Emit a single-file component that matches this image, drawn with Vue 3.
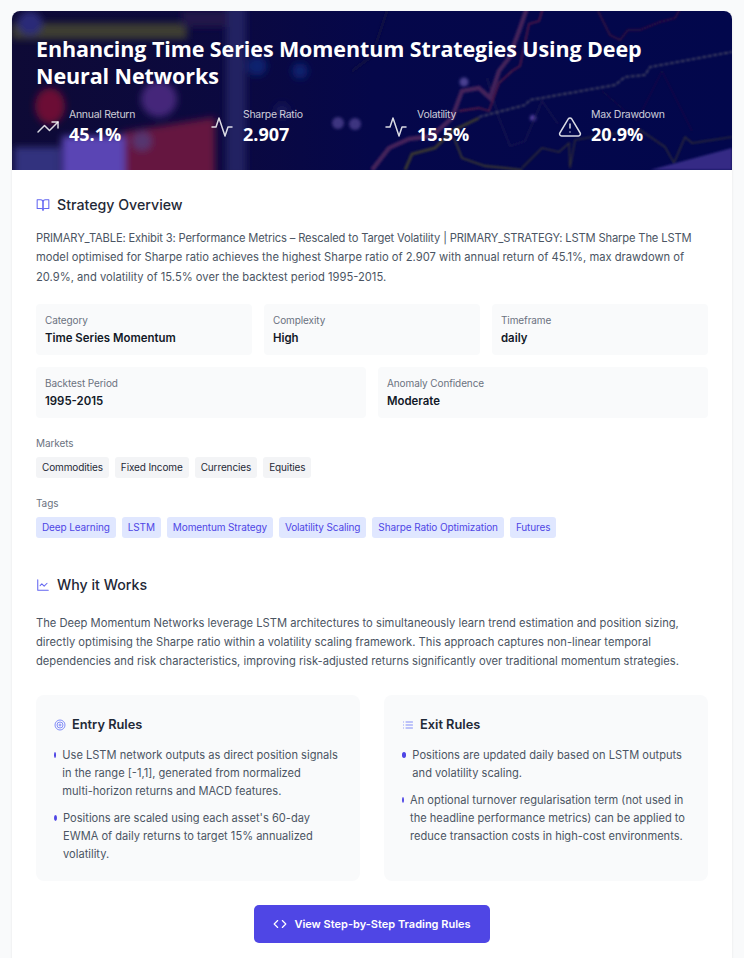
<script setup>
const stats = [
  { label: 'Annual Return', value: '45.1%', icon: 'trend' },
  { label: 'Sharpe Ratio', value: '2.907', icon: 'pulse' },
  { label: 'Volatility', value: '15.5%', icon: 'pulse' },
  { label: 'Max Drawdown', value: '20.9%', icon: 'alert' }
]
const row1 = [
  { label: 'Category', value: 'Time Series Momentum' },
  { label: 'Complexity', value: 'High' },
  { label: 'Timeframe', value: 'daily' }
]
const row2 = [
  { label: 'Backtest Period', value: '1995-2015' },
  { label: 'Anomaly Confidence', value: 'Moderate' }
]
const markets = ['Commodities', 'Fixed Income', 'Currencies', 'Equities']
const tags = ['Deep Learning', 'LSTM', 'Momentum Strategy', 'Volatility Scaling', 'Sharpe Ratio Optimization', 'Futures']
const entry = [
  'Use LSTM network outputs as direct position signals in the range [-1,1], generated from normalized multi-\u2060horizon returns and MACD features.',
  "Positions are scaled using each asset's 60-day EWMA of daily returns to target 15% annualized volatility."
]
const exit = [
  'Positions are updated daily based on LSTM outputs and volatility scaling.',
  'An optional turnover regularisation term (not used in the headline performance metrics) can be applied to reduce transaction costs in high-cost environments.'
]
</script>

<template>
  <div class="page">
    <main class="card">
      <header class="hero">
        <svg class="hero-bg" viewBox="0 0 720 159" preserveAspectRatio="none" aria-hidden="true">
          <defs>
            <filter id="b6" x="-30%" y="-30%" width="160%" height="160%"><feGaussianBlur stdDeviation="3.5" /></filter>
            <filter id="b2" x="-30%" y="-30%" width="160%" height="160%"><feGaussianBlur stdDeviation="1.6" /></filter>
            <filter id="b1" x="-5%" y="-5%" width="110%" height="110%"><feGaussianBlur stdDeviation="0.9" /></filter>
            <linearGradient id="base" x1="0" x2="1" y1="0" y2="0">
              <stop offset="0" stop-color="#0e0a36" />
              <stop offset="0.3" stop-color="#0b0940" />
              <stop offset="0.5" stop-color="#05074a" />
              <stop offset="1" stop-color="#02074c" />
            </linearGradient>
          </defs>
          <rect width="720" height="159" fill="url(#base)" />
          <g filter="url(#b6)">
            <rect x="0" y="12" width="175" height="16" fill="#3c3c30" />
            <circle cx="18" cy="12" r="12" fill="#2c2c78" />
            <ellipse cx="38" cy="95" rx="15" ry="18" fill="#6c0a34" />
            <circle cx="147" cy="88" r="18" fill="#44277a" />
            <path d="M110 121 L203 106 V170 H110 Z" fill="#65133f" />
            <path d="M50 125 H113 V170 H50 Z" fill="#5a44b4" />
            <rect x="2" y="136" width="46" height="35" fill="#32327e" />
            <circle cx="130" cy="130" r="10" fill="#573470" />
            <path d="M214 -5 H234 V165 H214 Z" fill="#232362" />
            <circle cx="245" cy="55" r="10" fill="#0a2470" />
            <circle cx="288" cy="60" r="8" fill="#0a2470" />
            <circle cx="270" cy="100" r="8" fill="#181858" />
            <rect x="170" y="0" width="45" height="16" fill="#221248" />
          </g>
          <g filter="url(#b2)">
            <circle cx="326" cy="112" r="6" fill="#3e3480" />
            <circle cx="343" cy="113" r="6" fill="#3e3480" />
            <circle cx="452" cy="71" r="4.5" fill="#4a4090" />
            <circle cx="521" cy="107" r="3" fill="#5643a0" />
          </g>
          <g fill="none" filter="url(#b1)">
            <path d="M475 67 L487 107 L498 135 L513 130 L530 90 L546 113" stroke="#1e1a50" stroke-width="1.2" />
            <path d="M340 60 L360 45 L375 0" stroke="#100d42" stroke-width="3" />
            <path d="M360 159 L377 137 L397 128 L420 125 L440 107 L450 80 L467 77 L478 87 L487 60 L497 47 L507 20 L515 -3" stroke="#44235a" stroke-width="4.5" />
            <path d="M447 100 L467 97 L477 100 L487 72 L500 60 L508 55 L517 13 L527 10 L531 -3" stroke="#551a45" stroke-width="1.8" />
            <path d="M586 0 L598 24 L608 29 L616 19 L628 19 L648 11 L663 7 L668 -2" stroke="#4e1438" stroke-width="1.2" />
            <path d="M467 106 L513 94 L518 89 L603 74 L613 66 L633 64 L638 56 L720 41" stroke="#464662" stroke-width="1.8" stroke-dasharray="4 1.5" />
            <path d="M393 159 L400 143 L423 137 L440 120 L467 107" stroke="#3a3830" stroke-width="3" />
            <path d="M442 127 L450 147 L473 155 L493 157 L510 159" stroke="#3c3a30" stroke-width="1.8" />
            <path d="M510 157 L530 137 L547 141 L557 132 L558 157 L563 129 L580 126 L628 119 L653 136 L662 152 L673 126 L680 132 L720 126" stroke="#3a3632" stroke-width="1.2" />
            <path d="M590 80 L625 110 L650 60 L680 120" stroke="#1e1440" stroke-width="1" />
          </g>
          <path d="M638 159 L720 137 V159 Z" fill="#352b85" filter="url(#b1)" />
        </svg>
        <h1 class="title">Enhancing Time Series Momentum Strategies Using Deep Neural Networks</h1>
        <div class="stats">
          <div v-for="s in stats" :key="s.label" class="stat">
            <svg class="stat-icon" viewBox="0 0 24 24" fill="none" stroke="currentColor" stroke-width="2" stroke-linecap="round" stroke-linejoin="round">
              <template v-if="s.icon === 'trend'">
                <polyline points="22 7 13.5 15.5 8.5 10.5 2 17" />
                <polyline points="16 7 22 7 22 13" />
              </template>
              <path v-else-if="s.icon === 'pulse'" d="M22 12h-4l-3 9L9 3l-3 9H2" />
              <template v-else>
                <path d="M10.29 3.86 1.82 18a2 2 0 0 0 1.71 3h16.94a2 2 0 0 0 1.71-3L13.71 3.86a2 2 0 0 0-3.42 0z" />
                <line x1="12" y1="9" x2="12" y2="13" />
                <line x1="12" y1="17" x2="12.01" y2="17" />
              </template>
            </svg>
            <div>
              <div class="stat-label">{{ s.label }}</div>
              <div class="stat-value">{{ s.value }}</div>
            </div>
          </div>
        </div>
      </header>

      <div class="content">
        <section>
          <h2 class="section-title">
            <svg class="sec-icon" viewBox="0 0 24 24" fill="none" stroke="currentColor" stroke-width="2" stroke-linecap="round" stroke-linejoin="round">
              <path d="M2 3h6a4 4 0 0 1 4 4v14a3 3 0 0 0-3-3H2z" />
              <path d="M22 3h-6a4 4 0 0 0-4 4v14a3 3 0 0 1 3-3h7z" />
            </svg>
            Strategy Overview
          </h2>
          <p class="para"><span class="tight">PRIMARY_TABLE: Exhibit 3: Performance Metrics – Rescaled to Target Volatility | PRIMARY_STRATEGY: LSTM Sharpe The LSTM</span> model optimised for Sharpe ratio achieves the highest Sharpe ratio of 2.907 with annual return of 45.1%, max drawdown of 20.9%, and volatility of 15.5% over the backtest period 1995-2015.</p>
          <div class="info-grid three">
            <div v-for="i in row1" :key="i.label" class="info">
              <div class="info-label">{{ i.label }}</div>
              <div class="info-value">{{ i.value }}</div>
            </div>
          </div>
          <div class="info-grid two">
            <div v-for="i in row2" :key="i.label" class="info">
              <div class="info-label">{{ i.label }}</div>
              <div class="info-value">{{ i.value }}</div>
            </div>
          </div>
          <div class="chip-block">
            <div class="chip-label">Markets</div>
            <div class="chips">
              <span v-for="m in markets" :key="m" class="chip">{{ m }}</span>
            </div>
          </div>
          <div class="chip-block">
            <div class="chip-label">Tags</div>
            <div class="chips">
              <span v-for="t in tags" :key="t" class="chip tag">{{ t }}</span>
            </div>
          </div>
        </section>

        <section class="why">
          <h2 class="section-title">
            <svg class="sec-icon" viewBox="0 0 24 24" fill="none" stroke="currentColor" stroke-width="2" stroke-linecap="round" stroke-linejoin="round">
              <path d="M3 3v18h18" />
              <path d="m19 9-5 5-4-4-3 3" />
            </svg>
            Why it Works
          </h2>
          <p class="para">The Deep Momentum Networks leverage LSTM architectures to simultaneously learn trend estimation and position sizing, directly optimising the Sharpe ratio within a volatility scaling framework. This approach captures non-linear temporal dependencies and risk characteristics, improving risk-adjusted returns significantly over traditional momentum strategies.</p>
        </section>

        <div class="rules">
          <div class="rule-card">
            <h3 class="rule-title">
              <svg class="rule-icon" viewBox="0 0 24 24" fill="none" stroke="currentColor" stroke-width="2">
                <circle cx="12" cy="12" r="10" />
                <circle cx="12" cy="12" r="6" />
                <circle cx="12" cy="12" r="2" />
              </svg>
              Entry Rules
            </h3>
            <ul class="rule-list">
              <li v-for="r in entry" :key="r"><i class="dot"></i><span>{{ r }}</span></li>
            </ul>
          </div>
          <div class="rule-card">
            <h3 class="rule-title">
              <svg class="rule-icon" viewBox="0 0 24 24" fill="none" stroke="currentColor" stroke-width="2" stroke-linecap="round">
                <line x1="8" y1="6" x2="21" y2="6" />
                <line x1="8" y1="12" x2="21" y2="12" />
                <line x1="8" y1="18" x2="21" y2="18" />
                <line x1="3" y1="6" x2="3.01" y2="6" />
                <line x1="3" y1="12" x2="3.01" y2="12" />
                <line x1="3" y1="18" x2="3.01" y2="18" />
              </svg>
              Exit Rules
            </h3>
            <ul class="rule-list">
              <li v-for="r in exit" :key="r"><i class="dot"></i><span>{{ r }}</span></li>
            </ul>
          </div>
        </div>

        <div class="cta">
          <button class="btn" type="button">
            <svg class="btn-icon" viewBox="0 0 24 24" fill="none" stroke="currentColor" stroke-width="2" stroke-linecap="round" stroke-linejoin="round">
              <polyline points="16 18 22 12 16 6" />
              <polyline points="8 6 2 12 8 18" />
            </svg>
            View Step-by-Step Trading Rules
          </button>
        </div>
      </div>
    </main>
  </div>
</template>

<style>
html, body { margin: 0; background: #f9fafb; }
</style>

<style scoped>
.page {
  height: 958px;
  overflow: hidden;
  padding: 11px 12px 0;
  box-sizing: border-box;
  background: #f9fafb;
  font-family: Inter, "Noto Sans", sans-serif;
  color: #1f2937;
}
.card {
  background: #fff;
  border-radius: 8px 8px 0 0;
  overflow: hidden;
  box-shadow: 0 1px 3px rgba(0, 0, 0, 0.08);
  height: 960px;
}
.hero {
  position: relative;
  height: 159px;
  box-sizing: border-box;
  padding: 25px 24px 0;
  color: #fff;
  overflow: hidden;
}
.hero-bg { position: absolute; inset: 0; width: 100%; height: 100%; }
.title {
  position: relative;
  margin: 0 0 19px;
  font-family: "Open Sans", sans-serif;
  font-size: 21.5px;
  line-height: 26.5px;
  font-weight: 700;
  letter-spacing: -0.1px;
}
.stats {
  position: relative;
  display: grid;
  grid-template-columns: repeat(4, 1fr);
  gap: 24px;
}
.stat { display: flex; align-items: center; gap: 9px; }
.stat-icon { width: 24px; height: 24px; flex: none; color: rgba(255, 255, 255, 0.85); stroke-width: 1.5; }
.stat-label { font-size: 10.5px; line-height: 14px; letter-spacing: -0.3px; color: rgba(255, 255, 255, 0.8); }
.stat-value { font-family: "Open Sans", sans-serif; font-size: 18px; line-height: 24px; font-weight: 700; }
.content { padding: 25px 24px; }
.section-title {
  display: flex;
  align-items: center;
  gap: 7px;
  margin: 0 0 14px;
  font-size: 14.2px;
  line-height: 20px;
  font-weight: 500;
  color: #1f2937;
}
.why .section-title { margin-bottom: 19px; }
.sec-icon { width: 14px; height: 14px; color: #6366f1; flex: none; stroke-width: 1.8; }
.para {
  margin: 0;
  font-size: 11.2px;
  line-height: 19.3px;
  color: #4b5563;
}
.tight { letter-spacing: -0.16px; }
.info-grid { display: grid; gap: 12px; margin-top: 12px; }
.info-grid.three { grid-template-columns: repeat(3, 1fr); margin-top: 17px; }
.info-grid.two { grid-template-columns: repeat(2, 1fr); }
.info {
  background: #f9fafb;
  border-radius: 4px;
  padding: 9px 9px 0;
  height: 51px;
  box-sizing: border-box;
}
.info-label { font-size: 10px; line-height: 15px; letter-spacing: -0.1px; color: #6b7280; }
.info-value { font-size: 11.4px; line-height: 21px; font-weight: 600; color: #111827; }
.chip-block { margin-top: 18px; }
.chip-label { font-size: 10px; line-height: 14px; letter-spacing: -0.1px; color: #6b7280; margin-bottom: 7px; }
.chips { display: flex; flex-wrap: wrap; gap: 6px; }
.chip {
  font-size: 10px;
  line-height: 21px;
  padding: 0 6px;
  letter-spacing: -0.12px;
  background: #f3f4f6;
  color: #1f2937;
  border-radius: 3px;
}
.chip.tag { background: #e0e7ff; color: #4f46e5; }
.why { margin-top: 37px; }
.rules { display: grid; grid-template-columns: 1fr 1fr; gap: 24px; margin-top: 23px; }
.rule-card {
  background: #f9fafb;
  border-radius: 8px;
  height: 186px;
  box-sizing: border-box;
  padding: 20px 18px;
}
.rule-title {
  display: flex;
  align-items: center;
  gap: 6px;
  margin: 0 0 11px;
  font-size: 12.8px;
  line-height: 20px;
  font-weight: 600;
  color: #1f2937;
}
.rule-icon { width: 12px; height: 12px; color: #818cf8; flex: none; }
.rule-list { list-style: none; margin: 0; padding: 0; }
.rule-list li { display: flex; gap: 6px; margin-bottom: 9px; font-size: 11.1px; line-height: 18px; color: #4b5563; }
.dot { width: 6px; height: 6px; margin-top: 6px; border-radius: 50%; background: #4f46e5; }
.cta { display: flex; justify-content: center; margin-top: 24px; }
.btn {
  display: flex;
  align-items: center;
  justify-content: center;
  gap: 7px;
  width: 236px;
  height: 38px;
  border: 0;
  border-radius: 5px;
  background: #4f46e5;
  color: #fff;
  font-family: inherit;
  font-size: 11px;
  font-weight: 600;
}
.btn-icon { width: 14px; height: 14px; }
</style>
